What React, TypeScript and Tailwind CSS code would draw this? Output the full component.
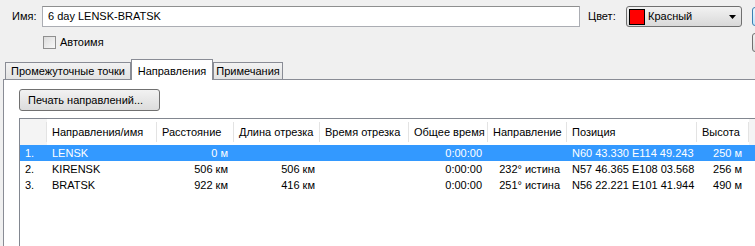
import React from "react";

const font = { fontFamily: '"Liberation Sans", Arial, sans-serif' };

type Row = {
  idx: string;
  name: string;
  dist: string;
  seg: string;
  segTime: string;
  total: string;
  dir: string;
  pos: string;
  alt: string;
};

const rows: Row[] = [
  { idx: "1.", name: "LENSK", dist: "0 м", seg: "", segTime: "", total: "0:00:00", dir: "", pos: "N60 43.330 E114 49.243", alt: "250 м" },
  { idx: "2.", name: "KIRENSK", dist: "506 км", seg: "506 км", segTime: "", total: "0:00:00", dir: "232° истина", pos: "N57 46.365 E108 03.568", alt: "256 м" },
  { idx: "3.", name: "BRATSK", dist: "922 км", seg: "416 км", segTime: "", total: "0:00:00", dir: "251° истина", pos: "N56 22.221 E101 41.944", alt: "490 м" },
];

const gridCols = "grid grid-cols-[27px_110px_77px_86px_89px_79px_79px_130px_52px]";

const headers = ["Направления/имя", "Расстояние", "Длина отрезка", "Время отрезка", "Общее время", "Направление", "Позиция", "Высота"];

function HeaderCell({ label }: { label: string }) {
  return (
    <div className="relative flex items-center pl-[5px] bg-white whitespace-nowrap overflow-hidden">
      {label}
      <span className="absolute right-0 top-[3px] bottom-[3px] w-px bg-[#e3e3e3]" />
    </div>
  );
}

function Tab({ label, active, w }: { label: string; active?: boolean; w: string }) {
  return active ? (
    <div className={`${w} h-[21px] -mb-px flex justify-center items-start pt-[3px] bg-white border border-b-0 border-[#898c95] relative z-10 whitespace-nowrap`}>
      {label}
    </div>
  ) : (
    <div className={`${w} h-[17px] mt-[4px] flex justify-center items-center bg-gradient-to-b from-[#f2f2f2] to-[#e3e3e3] border border-b-0 border-[#898c95] whitespace-nowrap overflow-hidden`}>
      {label}
    </div>
  );
}

export default function App() {
  return (
    <div className="w-[755px] h-[246px] overflow-hidden bg-[#f0f0f0] text-[11px] text-black" style={font}>
      {/* top row */}
      <div className="flex items-start w-[900px] h-[21px] mt-[6px]">
        <span className="ml-[12px] w-[30px] h-[21px] flex items-center">Имя:</span>
        <div className="w-[538px] h-[21px] bg-white border border-[#abadb3] border-t-[#8e8f8f] flex items-center pl-[5px]">
          6 day LENSK-BRATSK
        </div>
        <span className="ml-[8px] w-[38px] h-[21px] flex items-center">Цвет:</span>
        <div className="w-[116px] h-[21px] rounded-[3px] border border-[#707070] bg-gradient-to-b from-[#f2f2f2] to-[#d9d9d9] flex items-center pl-[2px] pr-[5px]">
          <span className="w-[16px] h-[16px] bg-[#ff0000] border border-black" />
          <span className="ml-[3px] flex-1">Красный</span>
          <svg width="7" height="4" viewBox="0 0 7 4">
            <path d="M0 0h7L3.5 4z" fill="#000" />
          </svg>
        </div>
        <div className="ml-[10px] mt-[1px] flex flex-col gap-[7px]">
          <div className="w-[75px] h-[19px] rounded-[3px] border border-[#3c7fb1] bg-gradient-to-b from-[#eaf6fd] to-[#bee6fd]" />
          <div className="w-[75px] h-[19px] rounded-[3px] border border-[#707070] bg-gradient-to-b from-[#f2f2f2] to-[#dcdcdc]" />
        </div>
      </div>

      {/* auto name */}
      <div className="flex items-center ml-[43px] mt-[9px] h-[13px]">
        <span className="w-[13px] h-[13px] border border-[#8f8f8f] bg-gradient-to-br from-[#dcdcdc] to-[#f8f8f8]" />
        <span className="ml-[4px]">Автоимя</span>
      </div>

      {/* tabs */}
      <div className="mt-[9px] flex items-end pl-[5px] w-[900px] relative">
        <Tab label="Промежуточные точки" w="w-[126px]" />
        <Tab label="Направления" active w="w-[82px]" />
        <Tab label="Примечания" w="w-[70px]" />
      </div>

      <div className="ml-[3px] w-[900px] h-[200px] bg-white border border-[#898c95] pt-[9px] pl-[15px]">
        <div className="w-[141px] h-[22px] rounded-[3px] border border-[#707070] bg-gradient-to-b from-[#f2f2f2] to-[#dcdcdc] flex items-center pl-[8px]">
          Печать направлений...
        </div>

        <div className="mt-[7px] h-[200px] border border-[#828790] bg-white">
          <div className="flex h-[26px]">
            <div className={`${gridCols} h-full`}>
              <div className="relative bg-[#f4f4f4]">
                <span className="absolute right-0 top-[3px] bottom-[3px] w-px bg-[#e3e3e3]" />
              </div>
              {headers.map((h) => (
                <HeaderCell key={h} label={h} />
              ))}
            </div>
            <div className="flex-1 bg-[#f4f4f4]" />
          </div>

          {rows.map((r, i) => (
            <div
              key={r.idx}
              className={`${gridCols} h-[16px] items-center whitespace-nowrap ${i === 0 ? "bg-[#3399ff] text-white" : ""}`}
            >
              <span className="pl-[5px]">{r.idx}</span>
              <span className="pl-[5px]">{r.name}</span>
              <span className="text-right pr-[6px]">{r.dist}</span>
              <span className="text-right pr-[5px]">{r.seg}</span>
              <span className="text-right pr-[5px]">{r.segTime}</span>
              <span className="text-right pr-[6px]">{r.total}</span>
              <span className="text-right pr-[7px]">{r.dir}</span>
              <span className="pl-[5px]">{r.pos}</span>
              <span className="text-right pr-[7px]">{r.alt}</span>
            </div>
          ))}
        </div>
      </div>
    </div>
  );
}
